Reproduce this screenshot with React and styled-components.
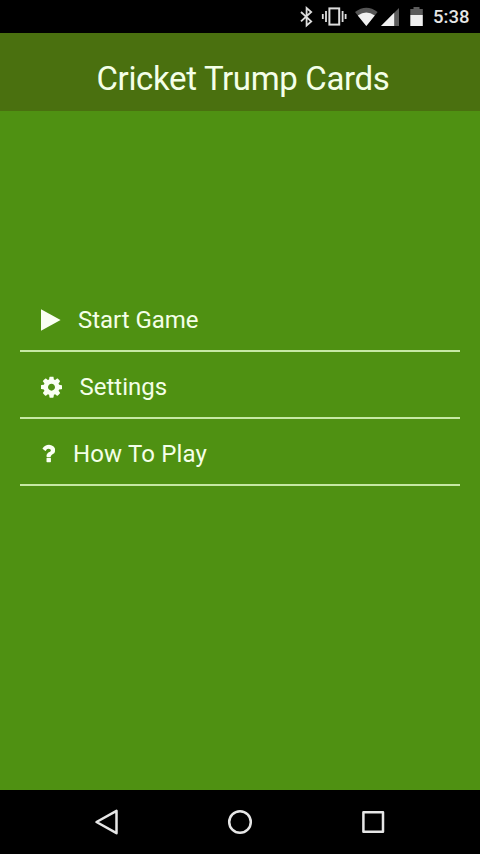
import React from "react";
import styled, { createGlobalStyle } from "styled-components";

const GlobalStyle = createGlobalStyle`
  body { margin: 0; background: #000; }
  * { box-sizing: border-box; }
`;

const Screen = styled.div`
  display: flex;
  flex-direction: column;
  height: 854px;
  width: 480px;
  overflow: hidden;
  background: #4f9112;
  font-family: Roboto, "Noto Sans", sans-serif;
  color: #f4ffe8;
`;

const StatusBar = styled.div`
  flex: none;
  display: flex;
  align-items: center;
  justify-content: flex-end;
  height: 33px;
  padding-right: 11px;
  background: #000;
`;

const StatusIcons = styled.svg`
  display: block;
  width: 133px;
  height: 33px;
`;

const Clock = styled.time`
  width: 36px;
  font-size: 18.5px;
  font-weight: 500;
  line-height: 33px;
  padding-top: 2px;
  color: #e6e6e6;
  white-space: nowrap;
`;

const Header = styled.header`
  flex: none;
  height: 78px;
  padding-left: 6px;
  background: #4a700f;
  text-align: center;
`;

const Title = styled.h1`
  margin: 0;
  font-size: 33px;
  font-weight: 400;
  line-height: 91px;
  letter-spacing: -0.35px;
  white-space: nowrap;
`;

const Menu = styled.nav`
  flex: 1;
  padding: 174px 20px 0;
`;

const MenuItem = styled.button`
  display: flex;
  align-items: center;
  width: 100%;
  height: 67px;
  padding: 4px 0 0 21px;
  border: 0;
  border-bottom: 2px solid #c6e9a4;
  background: transparent;
  color: inherit;
  font: inherit;
  text-align: left;
`;

const MenuIcon = styled.svg`
  flex: none;
  display: block;
  width: ${(p) => p.$width}px;
  height: 24px;
  margin-right: ${(p) => p.$gap}px;
  fill: #fafff3;
`;

const Label = styled.span`
  padding-top: 1px;
  font-size: 24px;
  line-height: 30px;
  letter-spacing: ${(p) => p.$tracking}px;
  white-space: nowrap;
`;

const NavBar = styled.footer`
  flex: none;
  display: flex;
  justify-content: space-between;
  height: 64px;
  padding: 16px 91px 0;
  background: #000;
`;

const NavIcon = styled.svg`
  display: block;
  width: 32px;
  height: 32px;
  fill: none;
  stroke: #e6e6e6;
  stroke-width: 2.5;
  stroke-linejoin: round;
`;

const GEAR =
  "M1024 896q0-106-75-181t-181-75-181 75-75 181 75 181 181 75 181-75 75-181zm512-109v222q0 12-8 23t-20 13l-185 28q-19 54-39 91 35 50 107 138 10 12 10 25t-9 23q-27 37-99 108t-94 71q-12 0-26-9l-138-108q-44 23-91 38-16 136-29 186-7 28-36 28h-222q-14 0-24.5-8.5t-11.5-21.5l-28-184q-49-16-90-37l-141 107q-10 9-25 9-14 0-25-11-126-114-165-168-7-10-7-23 0-12 8-23 15-21 51-66.5t54-70.5q-27-50-41-99l-183-27q-13-2-21-12.5t-8-23.5v-222q0-12 8-23t19-13l186-28q14-46 39-92-40-57-107-138-10-12-10-24 0-10 9-23 26-36 98.5-107.5t94.5-71.5q13 0 26 10l138 107q44-23 91-38 16-136 29-186 7-28 36-28h222q14 0 24.5 8.5t11.5 21.5l28 184q49 16 90 37l142-107q9-9 24-9 13 0 25 10 129 119 165 170 7 8 7 22 0 12-8 23-15 21-51 66.5t-54 70.5q26 50 41 98l183 28q13 2 21 12.5t8 23.5z";

const QUESTION =
  "M704 1192v240q0 16-12 28t-28 12h-240q-16 0-28-12t-12-28v-240q0-16 12-28t28-12h240q16 0 28 12t12 28zm316-600q0 54-15.5 101t-35 76.5-55 59.5-57.5 43.5-61 35.5q-41 23-68.5 65t-27.5 67q0 17-12 32.5t-28 15.5h-240q-15 0-25.5-18.5t-10.5-37.5v-45q0-83 65-156.5t143-108.5q59-27 84-56t25-76q0-42-46.5-74t-107.5-32q-65 0-108 29-35 25-107 115-13 16-31 16-12 0-25-8l-164-125q-13-10-15.5-25t5.5-28q160-266 464-266 80 0 161 31t146 83 106 127.5 41 158.5z";

const items = [
  { label: "Start Game", width: 20, gap: 17, tracking: -0.05, icon: <path d="M0 1.3 19.6 12 0 22.7Z" />, box: "0 0 20 24" },
  { label: "Settings", width: 21, gap: 17.5, tracking: 0, icon: <path d={GEAR} />, box: "0 10 1536 1752" },
  { label: "How To Play", width: 14, gap: 18, tracking: 0.15, icon: <path d={QUESTION} />, box: "-20 50 1024 1640" },
];

export default function App() {
  return (
    <>
      <GlobalStyle />
      <Screen>
        <StatusBar>
          <StatusIcons viewBox="300 0 133 33" aria-hidden="true">
            <path
              d="M301 12 311.2 21.4 306.6 25.4V8L311.2 12 301 21.4"
              fill="none"
              stroke="#ddd"
              strokeWidth="1.8"
            />
            <rect x="329.4" y="8.4" width="9.8" height="16.2" fill="none" stroke="#ddd" strokeWidth="2" />
            <path d="M326 11v11M342.6 11v11M322.8 14v5M345.6 14v5" stroke="#ddd" strokeWidth="1.8" />
            <path d="M355 12Q366.3 3.4 377.6 12L366.3 26Z" fill="#555" />
            <path d="M357.8 15.4Q366.3 9.6 374.8 15.4L366.3 26Z" fill="#f0f0f0" />
            <path d="M399 8v18h-18Z" fill="#5c5c5c" />
            <path d="M394.2 12.8V26H381Z" fill="#f0f0f0" />
            <path d="M410.3 15V9h3.2V7h6v2h3.3v6Z" fill="#5c5c5c" />
            <path d="M410.3 15h12.5v11h-12.5Z" fill="#f0f0f0" />
          </StatusIcons>
          <Clock>5:38</Clock>
        </StatusBar>
        <Header>
          <Title>Cricket Trump Cards</Title>
        </Header>
        <Menu>
          {items.map((item) => (
            <MenuItem key={item.label} type="button">
              <MenuIcon $width={item.width} $gap={item.gap} viewBox={item.box} aria-hidden="true">
                {item.icon}
              </MenuIcon>
              <Label $tracking={item.tracking}>{item.label}</Label>
            </MenuItem>
          ))}
        </Menu>
        <NavBar>
          <NavIcon viewBox="0 0 32 32">
            <path d="M5.5 16 25.5 4.8V27.2Z" />
          </NavIcon>
          <NavIcon viewBox="0 0 32 32">
            <circle cx="16" cy="16" r="10.8" />
          </NavIcon>
          <NavIcon viewBox="0 0 32 32">
            <rect x="6.4" y="6.2" width="19.6" height="19.6" />
          </NavIcon>
        </NavBar>
      </Screen>
    </>
  );
}
